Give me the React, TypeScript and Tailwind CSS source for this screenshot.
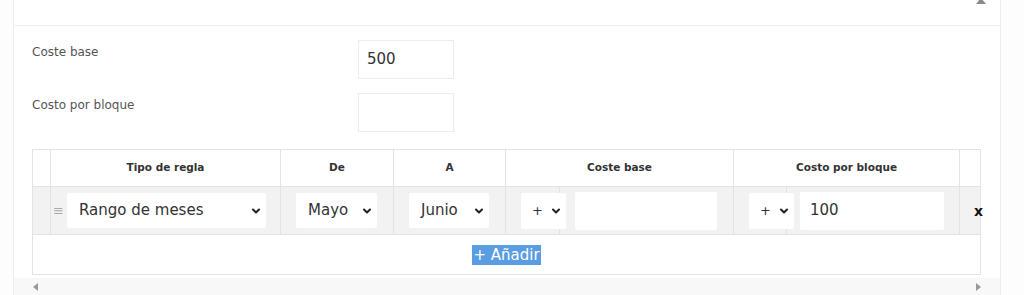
import { ChevronDown } from "lucide-react"

const font = { fontFamily: '"DejaVu Sans", "Open Sans", sans-serif' }

function FakeSelect({ label, className, textClass }: { label: string; className: string; textClass?: string }) {
  return (
    <div className={`flex items-center justify-between bg-white rounded-[2px] text-[#333] ${className}`}>
      <span className={textClass ?? "text-[15px]"}>{label}</span>
      <ChevronDown className="w-[12px] h-[12px] text-[#222]" strokeWidth={4} />
    </div>
  )
}

export default function App() {
  return (
    <div className="w-[1024px] h-[295px] overflow-hidden bg-[#fdfdfd]" style={font}>
      <div className="ml-[13px] w-[988px] h-full bg-white border-l border-r border-[#ececec] flex flex-col">
        {/* panel header */}
        <div className="h-[26px] border-b border-[#efefef] flex justify-end pr-[14px] shrink-0">
          <div className="w-0 h-0 -mt-[2px] border-l-[5px] border-r-[5px] border-b-[6px] border-l-transparent border-r-transparent border-b-[#8a8a8a]" />
        </div>

        {/* form */}
        <div className="pl-[18px] pr-[19px] pt-[14px] flex-1">
          <div className="flex">
            <label className="w-[326px] pt-[3px] text-[12px] text-[#555]">Coste base</label>
            <div className="w-[96px] h-[39px] border border-[#ececec] flex items-center pl-[8px] text-[15px] text-[#333]">500</div>
          </div>
          <div className="flex mt-[14px]">
            <label className="w-[326px] pt-[3px] text-[12px] text-[#555]">Costo por bloque</label>
            <div className="w-[96px] h-[39px] border border-[#ececec]" />
          </div>

          {/* rules table */}
          <table className="mt-[17px] w-[948px] border-collapse table-fixed text-[#333]">
            <colgroup>
              <col className="w-[18px]" />
              <col className="w-[230px]" />
              <col className="w-[113px]" />
              <col className="w-[112px]" />
              <col className="w-[228px]" />
              <col className="w-[226px]" />
              <col className="w-[21px]" />
            </colgroup>
            <thead>
              <tr className="h-[37px] text-[10.5px] font-bold">
                <th className="border border-[#e3e3e3]" />
                <th className="border border-[#e3e3e3]">Tipo de regla</th>
                <th className="border border-[#e3e3e3]">De</th>
                <th className="border border-[#e3e3e3]">A</th>
                <th className="border border-[#e3e3e3]">Coste base</th>
                <th className="border border-[#e3e3e3]">Costo por bloque</th>
                <th className="border border-[#e3e3e3]" />
              </tr>
            </thead>
            <tbody>
              <tr className="h-[48px] bg-[#f2f2f2]">
                <td className="border border-[#e3e3e3]" />
                <td className="border border-[#e3e3e3] p-0">
                  <div className="flex items-center">
                    <span className="w-[16px] pl-[2px] text-[13px] text-[#aaa] leading-none">≡</span>
                    <FakeSelect label="Rango de meses" className="w-[199px] h-[35px] pl-[12px] pr-[4px]" />
                  </div>
                </td>
                <td className="border border-[#e3e3e3] p-0">
                  <FakeSelect label="Mayo" className="ml-[15px] w-[81px] h-[35px] pl-[12px] pr-[4px]" />
                </td>
                <td className="border border-[#e3e3e3] p-0">
                  <FakeSelect label="Junio" className="ml-[15px] w-[80px] h-[35px] pl-[12px] pr-[4px]" />
                </td>
                <td className="border border-[#e3e3e3] p-0 h-[48px]">
                  <div className="flex h-[47px]">
                    <div className="w-[54px] border-r border-[#e3e3e3] flex items-center">
                      <FakeSelect label="+" textClass="text-[13px]" className="ml-[15px] w-[45px] h-[36px] shrink-0 pl-[11px] pr-[4px] relative" />
                    </div>
                    <div className="flex items-center pl-[15px]">
                      <div className="w-[142px] h-[38px] bg-white rounded-[2px]" />
                    </div>
                  </div>
                </td>
                <td className="border border-[#e3e3e3] p-0 h-[48px]">
                  <div className="flex h-[47px]">
                    <div className="w-[53px] border-r border-[#e3e3e3] flex items-center">
                      <FakeSelect label="+" textClass="text-[13px]" className="ml-[15px] w-[45px] h-[36px] shrink-0 pl-[11px] pr-[4px] relative" />
                    </div>
                    <div className="flex items-center pl-[13px]">
                      <div className="w-[144px] h-[38px] bg-white rounded-[2px] flex items-center pl-[10px] text-[15px]">100</div>
                    </div>
                  </div>
                </td>
                <td className="border border-[#e3e3e3] p-0 text-right">
                  <span className="text-[14px] font-bold text-[#111] relative left-[3px]">x</span>
                </td>
              </tr>
              <tr className="h-[40px]">
                <td colSpan={7} className="border border-[#e3e3e3] text-center bg-white">
                  <span className="bg-[#5a9de2] text-white text-[15px] px-[1px] py-[1px]">+ Añadir</span>
                </td>
              </tr>
            </tbody>
          </table>
        </div>

        {/* horizontal scrollbar */}
        <div className="h-[17px] bg-[#f8f8f8] flex items-center justify-between pl-[19px] pr-[19px] shrink-0">
          <div className="w-0 h-0 border-t-[4px] border-b-[4px] border-r-[5px] border-t-transparent border-b-transparent border-r-[#999]" />
          <div className="w-0 h-0 border-t-[4px] border-b-[4px] border-l-[5px] border-t-transparent border-b-transparent border-l-[#999]" />
        </div>
      </div>
    </div>
  )
}
